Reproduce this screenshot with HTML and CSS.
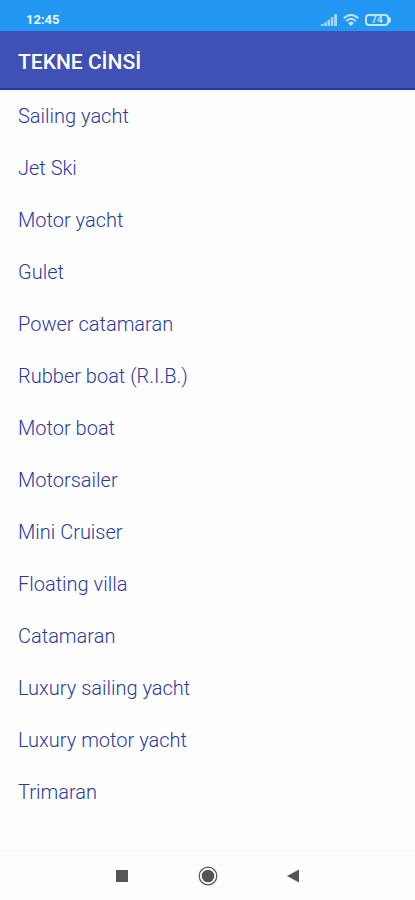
FILE: index.html
```html
<!DOCTYPE html>
<html lang="tr">
<head>
<meta charset="utf-8">
<meta name="viewport" content="width=device-width, initial-scale=1">
<title>TEKNE CİNSİ</title>
<link rel="stylesheet" href="styles.css">
</head>
<body>
<div class="status-bar">
  <time class="clock">12:45</time>
  <div class="indicators">
    <svg width="16" height="12" viewBox="0 0 16 12" aria-hidden="true"><path d="M0 12V10h2.500v2zM3.200 12V8.200h2.500V12zM6.500 12V5.800H9V12zM9.800 12V3h2.500v9zM13.200 12V0H16v12z" fill="currentColor" opacity=".85"/></svg>
    <svg width="16" height="12" viewBox="0 0 16 12" fill="none" stroke="currentColor" stroke-width="2" aria-hidden="true"><path d="M.7 4.300Q8-2.300 15.300 4.300M3.200 7Q8 2.600 12.800 7"/><path d="M8 12 5 8.900Q8 6.500 11 8.900Z" fill="currentColor" stroke="none"/></svg>
    <div class="battery">74</div>
  </div>
</div>
<header class="app-bar"><h1>TEKNE CİNSİ</h1></header>
<main>
  <ul class="boat-list">
    <li>Sailing yacht</li>
    <li>Jet Ski</li>
    <li>Motor yacht</li>
    <li>Gulet</li>
    <li>Power catamaran</li>
    <li>Rubber boat (R.I.B.)</li>
    <li>Motor boat</li>
    <li>Motorsailer</li>
    <li>Mini Cruiser</li>
    <li>Floating villa</li>
    <li>Catamaran</li>
    <li>Luxury sailing yacht</li>
    <li>Luxury motor yacht</li>
    <li>Trimaran</li>
  </ul>
</main>
<nav class="nav-bar">
  <button type="button" aria-label="Recent apps"><svg width="20" height="20" viewBox="0 0 20 20"><path d="M4 4h12v12H4z" fill="currentColor"/></svg></button>
  <button type="button" aria-label="Home"><svg width="20" height="20" viewBox="0 0 20 20"><circle cx="10" cy="10" r="8.800" fill="none" stroke="currentColor" stroke-width="1.200"/><circle cx="10" cy="10" r="6.300" fill="currentColor"/></svg></button>
  <button type="button" aria-label="Back"><svg width="20" height="20" viewBox="0 0 20 20"><path d="M3 10 15 3.500v13z" fill="currentColor"/></svg></button>
</nav>
</body>
</html>
```
FILE: styles.css
```css
* {
  box-sizing: border-box;
}

body {
  display: flex;
  flex-direction: column;
  min-height: 100vh;
  margin: 0;
  background: #fefefe;
  color: #2a3a9f;
  font-family: Roboto, sans-serif;
}

.status-bar {
  display: flex;
  align-items: center;
  justify-content: space-between;
  padding: 12px 24px 3px 26px;
  background: #2196f3;
  color: #c4e4fe;
}

.clock {
  color: #eef8ff;
  font-size: 13px;
  font-weight: 700;
  line-height: 16px;
}

.indicators {
  display: flex;
  align-items: center;
  gap: 6px;
}

.indicators svg {
  display: block;
}

.battery {
  position: relative;
  width: 24px;
  margin-right: 2px;
  border: 2px solid currentColor;
  border-radius: 4px;
  font-size: 10px;
  font-weight: 700;
  line-height: 8px;
  text-align: center;
}

.battery::after {
  content: "";
  position: absolute;
  top: 1px;
  right: -4px;
  width: 2px;
  height: 6px;
  border-radius: 0 2px 2px 0;
  background: currentColor;
}

.app-bar {
  padding: 18px 18px 13px;
  border-bottom: 2px solid #1c38b0;
  background: #3f51b5;
  color: #fff;
}

h1 {
  margin: 0;
  font-size: 21px;
  font-weight: 500;
  line-height: 26px;
}

main {
  flex: 1;
}

.boat-list {
  margin: 0;
  padding: 0;
  list-style: none;
}

.boat-list li {
  padding: 14px 18px;
  font-size: 20px;
  font-weight: 300;
  line-height: 24px;
}

.nav-bar {
  display: flex;
  justify-content: center;
  gap: 66px;
  padding: 15px 0 14px;
  border-top: 1px solid #f7f7f7;
  background: #fdfdfd;
}

.nav-bar button {
  display: block;
  padding: 0;
  border: 0;
  background: none;
  color: #555;
}

.nav-bar svg {
  display: block;
}
```
